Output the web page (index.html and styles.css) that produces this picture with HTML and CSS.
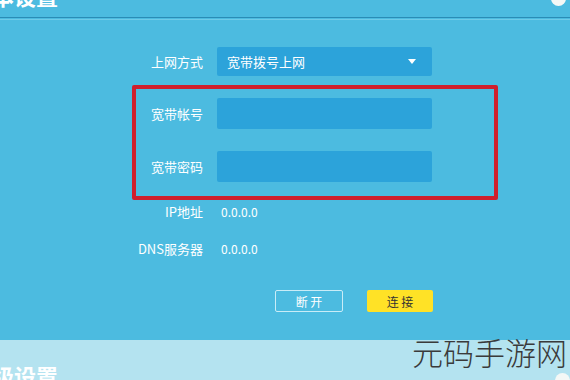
FILE: index.html
```html
<!DOCTYPE html>
<html lang="zh-CN">
<head>
  <meta charset="UTF-8">
  <title>基本设置</title>
  <link rel="stylesheet" href="styles.css">
</head>
<body>
  <div class="page">
    <header class="head">
      <h1 class="title">基本设置</h1>
      <span class="help-dot"></span>
    </header>
    <div class="head-rule"></div>

    <form class="form">
      <div class="row">
        <label class="label">上网方式</label>
        <div class="select">
          <span>宽带拨号上网</span>
          <span class="caret"></span>
        </div>
      </div>

      <!-- 红框：帐号与密码 -->
      <div class="mark">
        <div class="row">
          <label class="label">宽带帐号</label>
          <div class="input"></div>
        </div>
        <div class="row row-gap">
          <label class="label">宽带密码</label>
          <div class="input"></div>
        </div>
      </div>

      <div class="row info">
        <span class="label">IP地址</span>
        <span class="value">0.0.0.0</span>
      </div>
      <div class="row info info-dns">
        <span class="label">DNS服务器</span>
        <span class="value">0.0.0.0</span>
      </div>

      <div class="actions">
        <button type="button" class="btn btn-line">断 开</button>
        <button type="button" class="btn btn-yellow">连 接</button>
      </div>
    </form>

    <section class="foot">
      <h2 class="title title-foot">高级设置</h2>
      <span class="help-dot help-dot-foot"></span>
    </section>

    <div class="watermark">元码手游网</div>
  </div>
</body>
</html>
```

FILE: styles.css
```css
/* 全体 */
body {
  margin: 0;
  font-family: "Noto Sans CJK SC", "Liberation Sans", sans-serif;
  color: #fff;
}
.page {
  position: relative;
  width: 570px;
  height: 380px;
  overflow: hidden;
  background: #4cbbe0;
  display: flex;
  flex-direction: column;
}

/* 上部タイトル（切れて表示） */
.head {
  height: 17px;
  position: relative;
}
.title {
  margin: -20px 0 0 -30px;
  font-size: 22px;
  font-weight: bold;
  line-height: 30px;
  color: #fff;
}
.help-dot {
  position: absolute;
  right: 4px;
  top: -9px;
  width: 15px;
  height: 15px;
  border-radius: 50%;
  background: #f4f8f6;
}
.head-rule {
  height: 1px;
  background: #2a8cb6;
  box-shadow: 0 2px 0 #70cbe8;
}

/* フォーム */
.form {
  margin: 29px 0 0 136px;
  width: 358px;
  font-size: 13px;
}
.row {
  display: flex;
  align-items: center;
  gap: 14px;
}
.label {
  width: 67px;
  flex: none;
  text-align: right;
  white-space: nowrap;
}
.select {
  width: 215px;
  height: 29px;
  box-sizing: border-box;
  padding: 0 14px 0 10px;
  background: #2ca3da;
  border-radius: 2px;
  display: flex;
  align-items: center;
  justify-content: space-between;
}
.caret {
  width: 0;
  height: 0;
  border-left: 4px solid transparent;
  border-right: 4px solid transparent;
  border-top: 5px solid #fff;
  margin-right: 2px;
}
.mark {
  width: 358px;
  margin: 9px 0 0 -4px;
  padding: 9px 0 14px;
  border: 4px solid #cf1f2d;
  border-radius: 2px;
}
.input {
  width: 215px;
  height: 31px;
  background: #2ca3da;
  border-radius: 2px;
}
.row-gap {
  margin-top: 22px;
}
.info {
  height: 20px;
  margin-top: 1px;
  gap: 18px;
}
.info-dns {
  margin-top: 17px;
}
.value {
  font-size: 12px;
}

/* ボタン */
.actions {
  display: flex;
  gap: 24px;
  margin: 32px 0 0 139px;
}
.btn {
  width: 68px;
  height: 22px;
  padding: 0;
  font-family: inherit;
  font-size: 12px;
  border-radius: 2px;
  cursor: pointer;
}
.btn-line {
  background: transparent;
  border: 1px solid #c9ecf7;
  color: #fff;
}
.btn-yellow {
  width: 66px;
  background: #ffe226;
  border: none;
  color: #333;
}

/* 下部 */
.foot {
  margin-top: auto;
  height: 40px;
  background: #b4e3f0;
  position: relative;
}
.title-foot {
  margin: 20px 0 0 -30px;
}
.help-dot-foot {
  top: 33px;
  right: 0;
}

/* 透かし文字 */
.watermark {
  position: absolute;
  right: 3px;
  bottom: 10px;
  font-size: 31px;
  font-weight: 200;
  line-height: 36px;
  color: #3a3a3a;
}
```
